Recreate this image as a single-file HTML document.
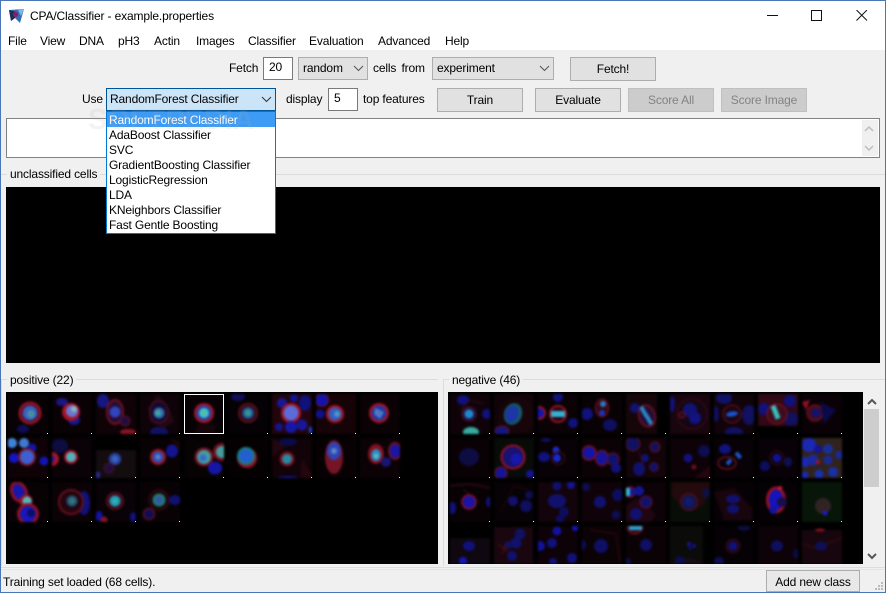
<!DOCTYPE html>
<html><head><meta charset="utf-8"><title>CPA/Classifier - example.properties</title>
<style>
html,body{margin:0;padding:0}
body{width:886px;height:593px;position:relative;overflow:hidden;background:#f0f0f0;font:12px/15px "Liberation Sans",sans-serif;color:#000;letter-spacing:-.15px}
.a{position:absolute;white-space:nowrap}
.box{position:absolute;box-sizing:border-box}
.in{background:#fff;border:1px solid #7a7a7a;padding-left:5px;line-height:18px}
.sel{background:#e1e1e1;border:1px solid #adadad;line-height:21px;padding-left:4px}
.btn{background:#e1e1e1;border:1px solid #adadad;text-align:center;line-height:22px}
.dis{background:#ccc;border:1px solid #bfbfbf;color:#838383}
.ln{position:absolute;background:#dcdcdc}
.lab{background:#f0f0f0;padding:0 3px}
.it{position:absolute;left:2px;height:15px;line-height:15px;white-space:nowrap}
svg.ch{position:absolute}
</style></head><body>
<div class="box" style="left:0;top:0;width:886px;height:50px;background:#fff"></div>

<svg class="a" style="left:8px;top:7px" width="17" height="17" viewBox="0 0 17 17"><path d="M1 3L16 2L12 16L7 11L3 14Z" fill="#2f6fb5"/><path d="M1 3L8 5L7 11L3 14Z" fill="#1d2f55"/><path d="M10 3L16 2L13 9Z" fill="#7fb8e8"/><circle cx="7.5" cy="7.5" r="2.6" fill="#8a1a6a"/></svg>
<div class="a" style="left:30px;top:9px">CPA/Classifier - example.properties</div>
<div class="box" style="left:767px;top:15px;width:11px;height:1px;background:#111"></div>
<div class="box" style="left:811px;top:10px;width:11px;height:11px;border:1px solid #111"></div>
<svg class="a" style="left:856px;top:10px" width="12" height="11"><path d="M.5 0L11 10.5M11 0L.5 10.5" stroke="#111" fill="none"/></svg>

<div class="a" style="left:8px;top:34px">File</div>
<div class="a" style="left:40px;top:34px">View</div>
<div class="a" style="left:79px;top:34px">DNA</div>
<div class="a" style="left:118px;top:34px">pH3</div>
<div class="a" style="left:154px;top:34px">Actin</div>
<div class="a" style="left:196px;top:34px">Images</div>
<div class="a" style="left:248px;top:34px">Classifier</div>
<div class="a" style="left:309px;top:34px">Evaluation</div>
<div class="a" style="left:378px;top:34px">Advanced</div>
<div class="a" style="left:445px;top:34px">Help</div>

<div class="a" style="left:229px;top:61px">Fetch</div>
<div class="box in" style="left:263px;top:57px;width:30px;height:23px">20</div>
<div class="box sel" style="left:298px;top:57px;width:70px;height:23px">random</div>
<svg class="ch" style="left:353px;top:65px" width="11" height="7"><path d="M1 1L5.5 5.5L10 1" stroke="#555" fill="none"/></svg>
<div class="a" style="left:373px;top:61px;word-spacing:2px">cells from</div>
<div class="box sel" style="left:432px;top:57px;width:122px;height:23px">experiment</div>
<svg class="ch" style="left:539px;top:65px" width="11" height="7"><path d="M1 1L5.5 5.5L10 1" stroke="#555" fill="none"/></svg>
<div class="box btn" style="left:570px;top:57px;width:86px;height:24px">Fetch!</div>

<div class="a" style="left:82px;top:92px">Use</div>
<div class="box" style="left:106px;top:88px;width:170px;height:23px;background:#cce4f7;border:1px solid #005499;padding-left:3px;line-height:21px">RandomForest Classifier</div>
<svg class="ch" style="left:261px;top:96px" width="11" height="7"><path d="M1 1L5.5 5.5L10 1" stroke="#333" fill="none"/></svg>
<div class="a" style="left:286px;top:92px">display</div>
<div class="box in" style="left:328px;top:88px;width:30px;height:23px">5</div>
<div class="a" style="left:363px;top:92px">top features</div>
<div class="box btn" style="left:437px;top:88px;width:86px;height:24px">Train</div>
<div class="box btn" style="left:535px;top:88px;width:86px;height:24px">Evaluate</div>
<div class="box btn dis" style="left:628px;top:88px;width:86px;height:24px">Score All</div>
<div class="box btn dis" style="left:721px;top:88px;width:86px;height:24px">Score Image</div>

<div class="box" style="left:6px;top:118px;width:874px;height:40px;background:#fff;border:1px solid #828282"></div>
<div class="box" style="left:862px;top:120px;width:16px;height:36px;background:#f0f0f0"></div>
<svg class="ch" style="left:864px;top:125px" width="10" height="28"><path d="M1 6L5 2L9 6M1 21L5 25L9 21" stroke="#bdbdbd" stroke-width="1.5" fill="none"/></svg>

<div class="ln" style="left:1px;top:174px;width:884px;height:1px"></div>
<div class="a lab" style="left:7px;top:167px">unclassified cells</div>
<div class="box" style="left:6px;top:187px;width:874px;height:176px;background:#000"></div>

<div class="ln" style="left:1px;top:379px;width:437px;height:1px"></div>
<div class="ln" style="left:443px;top:379px;width:442px;height:1px"></div>
<div class="ln" style="left:1px;top:380px;width:1px;height:186px"></div>
<div class="ln" style="left:443px;top:380px;width:1px;height:186px"></div>
<div class="a lab" style="left:7px;top:373px">positive (22)</div>
<div class="a lab" style="left:449px;top:373px">negative (46)</div>

<svg class="a" style="left:6px;top:392px" width="432" height="172" viewBox="6 392 432 172">
<defs><filter id="b" x="-5%" y="-5%" width="110%" height="110%" color-interpolation-filters="sRGB"><feGaussianBlur stdDeviation="1.1"/><feComponentTransfer><feFuncR type="linear" slope=".85"/><feFuncG type="linear" slope=".85"/><feFuncB type="linear" slope=".9"/></feComponentTransfer></filter></defs>
<rect x="6" y="392" width="432" height="172" fill="#000"/>
<g filter="url(#b)">
<svg x="8" y="394" width="40" height="40"><rect width="40" height="40" fill="#0a0306"/><ellipse cx="15" cy="35" rx="6" ry="4" fill="#101060"/><circle cx="22" cy="19" r="10" fill="#25103a" stroke="#b01428" stroke-width="3"/><circle cx="22" cy="19" r="7.5" fill="#4a70d0"/><circle cx="23" cy="20" r="4" fill="#50a8b8"/></svg>
<svg x="52" y="394" width="40" height="40"><rect width="40" height="40" fill="#0c0205"/><ellipse cx="10" cy="8" rx="6" ry="4" fill="#201a90"/><ellipse cx="22" cy="26" rx="6" ry="5" fill="#1c1ca0"/><circle cx="19" cy="18" r="9" fill="#c0182a"/><circle cx="20" cy="17" r="6" fill="#7f8ae8"/><circle cx="22" cy="15" r="3" fill="#a0d8d0"/></svg>
<svg x="96" y="394" width="40" height="40"><rect width="40" height="40" fill="#120408"/><ellipse cx="7" cy="7" rx="6" ry="7" fill="#1c1c90"/><ellipse cx="19" cy="18" rx="8" ry="12" fill="#2a103c" stroke="#8a1422" stroke-width="2"/><circle cx="19" cy="18" r="5.5" fill="#3a50d0"/><circle cx="29" cy="27" r="5" fill="#281048" stroke="#701422"/><ellipse cx="32" cy="38" rx="8" ry="3" fill="#a01828"/></svg>
<svg x="140" y="394" width="40" height="40"><rect width="40" height="40" fill="#10040a"/><path d="M18 0L30 16L34 28L24 34L10 28L8 14Z" fill="#2a0a14"/><ellipse cx="19" cy="18" rx="9" ry="11" fill="#180a38" stroke="#701420"/><circle cx="19" cy="19" r="5.5" fill="#3a80b8"/><circle cx="18" cy="19" r="3" fill="#50c0b8"/><ellipse cx="19" cy="38" rx="9" ry="5" fill="#151570"/></svg>
<svg x="184" y="394" width="40" height="40"><rect width="40" height="40" fill="#0a0305"/><path d="M10 40L14 30L30 30L32 40Z" fill="#1a060a"/><circle cx="20" cy="19" r="10" fill="#c0182a"/><circle cx="20" cy="19" r="7.5" fill="#2a50c0"/><circle cx="20" cy="19" r="5" fill="#58e0d0"/></svg>
<svg x="228" y="394" width="40" height="40"><rect width="40" height="40" fill="#060205"/><ellipse cx="10" cy="3" rx="7" ry="4" fill="#121260"/><circle cx="20" cy="19" r="9" fill="#300a14" stroke="#701420" stroke-width="2"/><circle cx="20" cy="19" r="6" fill="#2a60a8"/><circle cx="20" cy="19" r="3.5" fill="#40b0a0"/></svg>
<svg x="272" y="394" width="40" height="40"><rect width="40" height="40" fill="#2a060e"/><circle cx="10" cy="9" r="5" fill="#1c1ca8"/><circle cx="22" cy="4" r="4" fill="#1818a0"/><ellipse cx="33" cy="9" rx="6" ry="8" fill="#14148a"/><circle cx="19" cy="19" r="10" fill="#c0182a"/><circle cx="19" cy="19" r="7.5" fill="#6a80f0"/><circle cx="19" cy="33" r="6" fill="#1c1cb8"/><circle cx="30" cy="31" r="5.5" fill="#1c1ca8"/><circle cx="7" cy="33" r="4" fill="#1818a0"/><rect x="37" y="33" width="3" height="6" fill="#2050e0"/></svg>
<svg x="316" y="394" width="40" height="40"><rect width="40" height="40" fill="#1a0408"/><circle cx="6" cy="6" r="6.5" fill="#1818c0" stroke="#8a1020"/><circle cx="4" cy="20" r="4.5" fill="#1414a0"/><circle cx="19" cy="20" r="9" fill="#c0182a"/><circle cx="19" cy="20" r="6.5" fill="#3a70d8"/><circle cx="21" cy="20" r="3" fill="#60b0d0"/></svg>
<svg x="360" y="394" width="40" height="40"><rect width="40" height="40" fill="#0c0305"/><circle cx="19" cy="19" r="10" fill="#c0182a"/><circle cx="19" cy="19" r="7.5" fill="#2a40b8"/><path d="M15 14L24 18L20 25L14 20Z" fill="#5a90d8"/></svg>

<svg x="8" y="438" width="40" height="40"><rect width="40" height="40" fill="#120308"/><circle cx="4" cy="5" r="5" fill="#4a9af0"/><circle cx="16" cy="5" r="5" fill="#4a90e8"/><circle cx="24" cy="10" r="4.5" fill="#1818b8"/><circle cx="6" cy="20" r="5" fill="#1818d8"/><circle cx="19" cy="19" r="9" fill="#901828"/><circle cx="19" cy="19" r="7" fill="#4a70e8"/><circle cx="36" cy="23" r="4.5" fill="#1818c8"/></svg>
<svg x="52" y="438" width="40" height="40"><rect width="40" height="40" fill="#0c0308"/><ellipse cx="8" cy="8" rx="8" ry="7" fill="#10104a"/><circle cx="19" cy="19" r="7" fill="#c01828"/><circle cx="19" cy="19" r="5" fill="#60d0d0"/><circle cx="0" cy="21" r="7" fill="#c01830"/><circle cx="-1" cy="21" r="3.5" fill="#2020c8"/><circle cx="4" cy="21" r="1" fill="#c01830"/></svg>
<svg x="96" y="438" width="40" height="40"><rect width="40" height="12" fill="#000"/><rect y="12" width="40" height="28" fill="#181012"/><circle cx="19" cy="21" r="6" fill="#3050b8"/><circle cx="19" cy="21" r="3" fill="#4878d0"/><circle cx="13" cy="30" r="5" fill="#2a1048" stroke="#501428"/><rect y="34" width="4" height="6" fill="#3030a0"/></svg>
<svg x="140" y="438" width="40" height="40"><rect width="40" height="40" fill="#0a0305"/><ellipse cx="32" cy="13" rx="6" ry="6.5" fill="#1818a0"/><circle cx="18" cy="19" r="8" fill="#b01828"/><circle cx="18" cy="19" r="5.5" fill="#3a60d0"/><circle cx="18" cy="19" r="2.5" fill="#60a0d8"/><path d="M30 0L40 4V14Z" fill="#20060a"/></svg>
<svg x="184" y="438" width="40" height="40"><rect width="40" height="40" fill="#090304"/><circle cx="20" cy="19" r="9.5" fill="#8a1424"/><circle cx="20" cy="19" r="7" fill="#50b8b0"/><circle cx="19" cy="20" r="3.5" fill="#4080e0"/><circle cx="38" cy="14" r="9" fill="#8a1424"/><circle cx="38" cy="14" r="6" fill="#50b8b0"/><ellipse cx="31" cy="30" rx="7" ry="6.5" fill="#1a1ab8"/></svg>
<svg x="228" y="438" width="40" height="40"><rect width="40" height="40" fill="#060204"/><circle cx="19" cy="20" r="10" fill="#b01828"/><circle cx="18" cy="18" r="9" fill="#209090"/><circle cx="18" cy="18" r="6.5" fill="#2a70e8"/></svg>
<svg x="272" y="438" width="40" height="40"><rect width="40" height="40" fill="#140408"/><path d="M0 0L14 8L0 20ZM30 20L40 36V40H28Z" fill="#2a0810"/><ellipse cx="16" cy="4" rx="9" ry="4" fill="#0e0e50"/><circle cx="15" cy="21" r="7.5" fill="#8a1424"/><circle cx="15" cy="21" r="5" fill="#30a0b0"/><ellipse cx="16" cy="40" rx="10" ry="2" fill="#1818a0"/></svg>
<svg x="316" y="438" width="40" height="40"><rect width="40" height="40" fill="#0a0204"/><ellipse cx="18" cy="19" rx="9" ry="17" fill="#8a1828"/><ellipse cx="18" cy="13" rx="7" ry="9" fill="#3a50c8"/><circle cx="18" cy="13" r="3" fill="#6aa0d8"/></svg>
<svg x="360" y="438" width="40" height="40"><rect width="40" height="40" fill="#0e0306"/><ellipse cx="35" cy="13" rx="7" ry="9" fill="#8a1424"/><ellipse cx="35" cy="13" rx="5" ry="7" fill="#1c1cb8"/><ellipse cx="16" cy="16" rx="8" ry="10" fill="#9a1424"/><ellipse cx="16" cy="17" rx="5" ry="6" fill="#3aa0d0"/><circle cx="16" cy="18" r="2.5" fill="#60e0e0"/><circle cx="26" cy="24" r="5" fill="#1a1a80"/></svg>

<svg x="8" y="482" width="40" height="40"><rect width="40" height="40" fill="#0a0306"/><ellipse cx="11" cy="10" rx="7" ry="10" fill="#1c1cc0" stroke="#a81428" stroke-width="3" transform="rotate(-25 11 10)"/><circle cx="18" cy="19" r="6.5" fill="#b01828"/><circle cx="19" cy="19" r="4.5" fill="#60d8d0"/><circle cx="20" cy="32" r="9.5" fill="#1c1cd0" stroke="#a81428" stroke-width="3"/><circle cx="23" cy="31" r="4" fill="#101070"/></svg>
<svg x="52" y="482" width="40" height="40"><rect width="40" height="40" fill="#0e0306"/><ellipse cx="32" cy="21" rx="6" ry="12" fill="#141488"/><circle cx="19" cy="20" r="12" fill="#2a0612" stroke="#7a1222" stroke-width="2"/><circle cx="20" cy="19" r="5.5" fill="#2a6088"/><circle cx="20" cy="19" r="3" fill="#3a9078"/></svg>
<svg x="96" y="482" width="40" height="40"><rect width="40" height="40" fill="#0b0307"/><circle cx="19" cy="19" r="8.5" fill="#40101a" stroke="#781422"/><circle cx="19" cy="19" r="5.5" fill="#30b0c8"/><circle cx="19" cy="19" r="2.5" fill="#30d8c0"/><ellipse cx="3" cy="34" rx="3.5" ry="5" fill="#1616b8"/><circle cx="8" cy="38" r="3.5" fill="#9a1828"/><ellipse cx="37" cy="35" rx="3" ry="5" fill="#14148a"/></svg>
<svg x="140" y="482" width="40" height="40"><rect width="40" height="40" fill="#0a0306"/><circle cx="19" cy="18" r="10" fill="#20080c" stroke="#4a0e18"/><circle cx="19" cy="18" r="6.5" fill="#209080"/><circle cx="19" cy="18" r="3.5" fill="#4a60c0"/><ellipse cx="35" cy="18" rx="6" ry="5" fill="#141480"/><circle cx="9" cy="32" r="5.5" fill="#101060" stroke="#701420" stroke-width="1.5"/></svg>
</g>
<rect x="184.5" y="394.5" width="39" height="39" fill="none" stroke="#fff"/>
<g fill="#fff"><rect x="47" y="433" width="1" height="1"/><rect x="91" y="433" width="1" height="1"/><rect x="135" y="433" width="1" height="1"/><rect x="179" y="433" width="1" height="1"/><rect x="267" y="433" width="1" height="1"/><rect x="311" y="433" width="1" height="1"/><rect x="355" y="433" width="1" height="1"/><rect x="399" y="433" width="1" height="1"/><rect x="47" y="477" width="1" height="1"/><rect x="91" y="477" width="1" height="1"/><rect x="135" y="477" width="1" height="1"/><rect x="179" y="477" width="1" height="1"/><rect x="223" y="477" width="1" height="1"/><rect x="267" y="477" width="1" height="1"/><rect x="311" y="477" width="1" height="1"/><rect x="355" y="477" width="1" height="1"/><rect x="399" y="477" width="1" height="1"/><rect x="47" y="521" width="1" height="1"/><rect x="91" y="521" width="1" height="1"/><rect x="135" y="521" width="1" height="1"/><rect x="179" y="521" width="1" height="1"/></g>
</svg>

<svg class="a" style="left:448px;top:392px" width="415" height="172" viewBox="448 392 415 172">
<rect x="448" y="392" width="415" height="172" fill="#000"/>
<g filter="url(#b)">
<svg x="450" y="394" width="40" height="40"><rect width="40" height="40" fill="#12040a"/><ellipse cx="13" cy="6" rx="6" ry="5" fill="#14148a"/><circle cx="37" cy="20" r="5" fill="#14148a"/><path d="M10 16L20 6L34 10" stroke="#401018" fill="none"/><circle cx="19" cy="20" r="7" fill="#1c1860" stroke="#701420"/><circle cx="19" cy="20" r="4.5" fill="#28a0d8"/><ellipse cx="21" cy="38" rx="8" ry="5" fill="#40c8b0"/></svg>
<svg x="494" y="394" width="40" height="40"><rect width="40" height="40" fill="#14050a"/><path d="M2 40L6 14L20 2L38 8L40 30L30 40Z" fill="#1c060c"/><ellipse cx="19" cy="20" rx="9" ry="11" fill="#186a70" transform="rotate(20 19 20)"/><ellipse cx="18" cy="20" rx="6.5" ry="8.5" fill="#2040b8" transform="rotate(20 18 20)"/><ellipse cx="8" cy="37" rx="7" ry="5" fill="#1a1a90" stroke="#701420"/></svg>
<svg x="538" y="394" width="40" height="40"><rect width="40" height="40" fill="#0c0306"/><circle cx="20" cy="20" r="8" fill="#28081a" stroke="#b01828" stroke-width="2"/><rect x="13" y="17" width="14" height="6" fill="#40d0e8"/><circle cx="1" cy="19" r="6" fill="#1818c8" stroke="#b01828" stroke-width="2"/><circle cx="20" cy="3" r="5" fill="#14148a"/><circle cx="35" cy="29" r="5" fill="#14148a"/></svg>
<svg x="582" y="394" width="40" height="40"><rect width="40" height="40" fill="#0a0306"/><ellipse cx="20" cy="14" rx="6.5" ry="9" fill="#400a18" stroke="#901422"/><circle cx="21" cy="10" r="3" fill="#3090e0"/><circle cx="20" cy="19" r="3" fill="#2040d0"/><circle cx="5" cy="20" r="6" fill="#14148a"/><ellipse cx="28" cy="31" rx="7" ry="6" fill="#12126a"/></svg>
<svg x="626" y="394" width="31" height="40"><rect width="31" height="40" fill="#1a080c"/><circle cx="9" cy="14" r="5" fill="#161680"/><ellipse cx="21" cy="22" rx="8" ry="11" fill="#2a1040" stroke="#901422" stroke-width="1.5" transform="rotate(-15 21 22)"/><rect x="16" y="12" width="4" height="11" fill="#30a0d8" transform="rotate(-30 18 18)"/><rect x="21" y="20" width="4" height="11" fill="#30a0d8" transform="rotate(-30 23 26)"/></svg>
<svg x="670" y="394" width="40" height="40"><rect width="40" height="40" fill="#1e0610"/><circle cx="22" cy="20" r="15" fill="#180816" stroke="#4a0e18"/><circle cx="20" cy="16" r="7" fill="#161680"/><circle cx="25" cy="24" r="6" fill="#161690"/><circle cx="12" cy="21" r="3" fill="#300a20" stroke="#901422"/><ellipse cx="2" cy="10" rx="3" ry="8" fill="#161680"/></svg>
<svg x="714" y="394" width="40" height="40"><rect width="40" height="40" fill="#14040c"/><ellipse cx="10" cy="4" rx="8" ry="6" fill="#161670"/><circle cx="18" cy="20" r="9" fill="#200814" stroke="#801422"/><ellipse cx="18" cy="20" rx="6" ry="2.5" fill="#2060e8" transform="rotate(-8 18 20)"/><ellipse cx="35" cy="21" rx="7" ry="10" fill="#14146a"/><ellipse cx="20" cy="38" rx="9" ry="5" fill="#14146a"/><ellipse cx="2" cy="20" rx="3" ry="8" fill="#12126a"/></svg>
<svg x="758" y="394" width="40" height="32"><rect width="40" height="32" fill="#3a0a18"/><circle cx="6" cy="15" r="6" fill="#14148a"/><circle cx="32" cy="7" r="6" fill="#14148a"/><circle cx="33" cy="25" r="7" fill="#14146a"/><circle cx="19" cy="20" r="10" fill="#4a1020" stroke="#a01424"/><rect x="15" y="11" width="5" height="14" fill="#40e0d0" transform="rotate(-22 18 18)"/></svg>
<svg x="802" y="394" width="40" height="40"><rect width="40" height="40" fill="#0c0208"/><circle cx="13" cy="19" r="8" fill="#501020" stroke="#a01424"/><circle cx="14" cy="19" r="4.5" fill="#161680"/><path d="M18 8L34 16L22 30Z" fill="#0c0c50"/><path d="M0 8L8 6L4 16Z" fill="#a81428"/></svg>

<svg x="450" y="438" width="40" height="40"><rect width="40" height="40" fill="#0c0206"/><ellipse cx="19" cy="19" rx="10" ry="9" fill="#10104a"/></svg>
<svg x="494" y="438" width="40" height="40"><rect width="40" height="40" fill="#0a0e08"/><circle cx="19" cy="19" r="11.5" fill="#1e1680" stroke="#b01428" stroke-width="2"/><circle cx="22" cy="21" r="5.5" fill="#1c1cc0"/><ellipse cx="7" cy="35" rx="6" ry="6" fill="#1818a8" stroke="#901422"/><circle cx="36" cy="36" r="4" fill="#1818a0"/></svg>
<svg x="538" y="438" width="40" height="40"><rect width="40" height="40" fill="#0a0206"/><circle cx="18" cy="12" r="3.5" fill="#2030d8"/><circle cx="19" cy="20" r="4" fill="#1c30e0"/><ellipse cx="6" cy="19" rx="6" ry="5" fill="#14148a"/><circle cx="20" cy="20" r="6.5" fill="none" stroke="#601020"/><ellipse cx="8" cy="2" rx="5" ry="2" fill="#12126a"/></svg>
<svg x="582" y="438" width="40" height="40"><rect width="40" height="40" fill="#0e0306"/><circle cx="7" cy="15" r="7" fill="#1818b8" stroke="#901422" stroke-width="1.5"/><ellipse cx="20" cy="20" rx="6.5" ry="7.5" fill="#1818b0" stroke="#801422" stroke-width="1.5"/><circle cx="31" cy="21" r="6" fill="#14147a" stroke="#801422"/><circle cx="34" cy="30" r="5" fill="#14148a"/></svg>
<svg x="626" y="438" width="40" height="40"><rect width="40" height="40" fill="#16050a"/><circle cx="7" cy="6" r="7" fill="#14146a" stroke="#701420"/><ellipse cx="13" cy="31" rx="6" ry="7" fill="#14147a"/><circle cx="19" cy="20" r="4" fill="#141480"/><circle cx="28" cy="29" r="4.5" fill="#14147a" stroke="#601020"/><circle cx="29" cy="9" r="5" fill="#14146a" stroke="#801420"/><path d="M13 14L17 26" stroke="#501018"/></svg>
<svg x="670" y="438" width="40" height="40"><rect width="40" height="40" fill="#100308"/><circle cx="18" cy="20" r="4.5" fill="#14148a"/><circle cx="34" cy="13" r="6" fill="#10105a"/><circle cx="24" cy="29" r="2.5" fill="#7a1020"/><path d="M24 40L40 28V40Z" fill="#2a0812"/></svg>
<svg x="714" y="438" width="40" height="40"><rect width="40" height="40" fill="#0a0206"/><ellipse cx="11" cy="11" rx="6" ry="5" fill="#16168a"/><rect x="13" y="21" width="4" height="6" fill="#2060e0" transform="rotate(40 15 24)"/><rect x="22" y="14" width="4" height="7" fill="#2060e0" transform="rotate(-40 24 17)"/><ellipse cx="13" cy="25" rx="9" ry="6" fill="none" stroke="#801422" stroke-width="1.5"/></svg>
<svg x="758" y="438" width="40" height="40"><rect width="40" height="40" fill="#0a0208"/><circle cx="19" cy="20" r="4.5" fill="#1616a0"/><circle cx="19" cy="20" r="7" fill="none" stroke="#4a0e18"/><ellipse cx="7" cy="28" rx="5" ry="5" fill="#10106a"/><ellipse cx="30" cy="24" rx="4" ry="5" fill="#12125a"/></svg>
<svg x="802" y="438" width="40" height="40"><rect width="40" height="40" fill="#3a2a20"/><circle cx="7" cy="7" r="7" fill="#2030c8"/><circle cx="3" cy="24" r="5" fill="#2030c8"/><circle cx="16" cy="11" r="4" fill="#1818a8"/><circle cx="26" cy="11" r="5" fill="#1e38a8"/><circle cx="11" cy="22" r="5.5" fill="#2030b0"/><circle cx="26" cy="22" r="4.5" fill="#1e30a8"/><circle cx="37" cy="17" r="4" fill="#1e30a8"/><circle cx="17" cy="36" r="4.5" fill="#1e38c0"/><circle cx="31" cy="34" r="5" fill="#1e38b8"/><circle cx="3" cy="37" r="3.5" fill="#2030c8"/><circle cx="16" cy="24" r="2" fill="#c01424"/></svg>

<svg x="450" y="482" width="40" height="40"><rect width="40" height="40" fill="#0a0306"/><path d="M0 4L20 2L40 6M14 8L26 18" stroke="#501018" fill="none"/><circle cx="19" cy="20" r="7" fill="#2018b8" stroke="#a81428" stroke-width="1.5"/><ellipse cx="2" cy="26" rx="4" ry="6" fill="#14148a"/><ellipse cx="39" cy="20" rx="3" ry="5" fill="#14148a"/></svg>
<svg x="494" y="482" width="40" height="40"><rect width="40" height="40" fill="#090306"/><path d="M6 30L20 4L34 8" stroke="#2a0810" fill="none"/><circle cx="19" cy="19" r="5" fill="#14147a"/><circle cx="32" cy="24" r="6" fill="#12126a"/><circle cx="35" cy="13" r="4" fill="#10105a"/></svg>
<svg x="538" y="482" width="40" height="40"><rect width="40" height="40" fill="#16050c"/><ellipse cx="19" cy="19" rx="9" ry="7" fill="#14147a"/><circle cx="19" cy="4" r="4.5" fill="#14147a"/><circle cx="33" cy="3" r="4" fill="#1818a0"/><circle cx="26" cy="30" r="5" fill="#10106a"/><circle cx="22" cy="37" r="4" fill="#10106a"/></svg>
<svg x="582" y="482" width="40" height="40"><rect width="40" height="40" fill="#12040a"/><circle cx="18" cy="20" r="6" fill="#14147a"/><circle cx="4" cy="5" r="4" fill="#10105a"/><circle cx="36" cy="13" r="6" fill="#10106a"/><circle cx="34" cy="33" r="4.5" fill="#10105a"/></svg>
<svg x="626" y="482" width="40" height="40"><rect width="40" height="40" fill="#0f0308"/><path d="M0 24L10 16L22 22L30 34L24 40H0Z" fill="#260812"/><circle cx="4" cy="10" r="5" fill="#1818a8" stroke="#b01428"/><rect x="0" y="6" width="4" height="8" fill="#40d8e0"/><circle cx="13" cy="9" r="5" fill="#1818a0"/><circle cx="20" cy="20" r="6" fill="#14147a" stroke="#801422"/><circle cx="10" cy="32" r="6" fill="#14147a"/></svg>
<svg x="670" y="482" width="40" height="40"><rect width="40" height="40" fill="#0a1008"/><path d="M3 2Q-2 14 10 22Q22 34 34 22Q38 14 40 0L40 0H2Z" fill="#2a0c0e"/><circle cx="19" cy="20" r="8.5" fill="#1a1a50" stroke="#5a1018" stroke-width="1.5"/><circle cx="19" cy="20" r="4.5" fill="#14207a"/><ellipse cx="36" cy="11" rx="4" ry="5" fill="#12124a"/></svg>
<svg x="714" y="482" width="40" height="40"><rect width="40" height="40" fill="#080206"/><path d="M0 10L20 6L38 26L38 38L10 38Z" fill="#1e060e"/><ellipse cx="19" cy="17" rx="7" ry="4.5" fill="#14147a"/><ellipse cx="19" cy="27" rx="6" ry="4.5" fill="#14147a"/></svg>
<svg x="758" y="482" width="40" height="40"><rect width="40" height="40" fill="#060206"/><ellipse cx="18" cy="18" rx="8.5" ry="12" fill="#1818d0" stroke="#b01428" stroke-width="3"/><circle cx="15" cy="28" r="4" fill="#1818b0"/><circle cx="22" cy="6" r="2" fill="#f02030"/><circle cx="24" cy="20" r="5" fill="#201050"/></svg>
<svg x="802" y="482" width="40" height="40"><rect width="40" height="40" fill="#0a1a0a"/><circle cx="21" cy="24" r="8" fill="#3a2a28"/><circle cx="23" cy="31" r="2.5" fill="#2020e0"/></svg>

<svg x="450" y="526" width="40" height="38"><rect width="40" height="12" fill="#000"/><rect y="12" width="40" height="28" fill="#120a12"/><ellipse cx="19" cy="20" rx="6" ry="5" fill="#14148a"/><circle cx="13" cy="35" r="4" fill="#1818d0"/></svg>
<svg x="494" y="526" width="39" height="38"><rect y="1" width="39" height="40" fill="#1e0810"/><circle cx="26" cy="8" r="5.5" fill="#14146a"/><circle cx="22" cy="17" r="5.5" fill="#14147a"/><circle cx="14" cy="19" r="4" fill="#14146a"/><circle cx="18" cy="30" r="5" fill="#14147a"/><path d="M4 18L14 26M8 28L12 18" stroke="#6a1018"/></svg>
<svg x="538" y="526" width="40" height="38"><rect width="40" height="40" fill="#100308"/><circle cx="19" cy="5" r="4.5" fill="#1414b0"/><circle cx="14" cy="17" r="5" fill="#14148a"/><circle cx="2" cy="20" r="5" fill="#1414b0"/><circle cx="37" cy="2" r="3" fill="#1818d0"/><circle cx="34" cy="32" r="5" fill="#14148a"/><circle cx="15" cy="36" r="4" fill="#14148a"/></svg>
<svg x="582" y="526" width="40" height="38"><rect width="40" height="40" fill="#0e0306"/><path d="M8 4L34 8L38 36" stroke="#3a0c14" fill="none"/><circle cx="19" cy="20" r="7" fill="#121270"/><ellipse cx="1" cy="19" rx="3" ry="5" fill="#101060"/></svg>
<svg x="626" y="526" width="40" height="38"><rect width="40" height="40" fill="#0d0306"/><circle cx="9" cy="0" r="8" fill="#40101a" stroke="#a01424"/><rect x="3" y="0" width="13" height="4" fill="#30c0e8"/><circle cx="20" cy="19" r="6" fill="#121270"/><circle cx="1" cy="36" r="4" fill="#10105a"/></svg>
<svg x="670" y="526" width="33" height="38"><rect width="33" height="40" fill="#0e0e0a"/><path d="M0 38Q20 26 33 38Z" fill="#1a1018"/><circle cx="19" cy="18" r="2" fill="#1818b0"/><circle cx="24" cy="20" r="2" fill="#1414a0"/><circle cx="20" cy="22" r="1.5" fill="#1414a0"/><circle cx="10" cy="35" r="5" fill="#10105a"/></svg>
<svg x="714" y="526" width="40" height="38"><rect width="40" height="40" fill="#060206"/><circle cx="19" cy="20" r="7" fill="#200816" stroke="#4a0e18"/><circle cx="19" cy="20" r="4.5" fill="#14148a"/><ellipse cx="5" cy="35" rx="5" ry="4" fill="#10105a"/><ellipse cx="30" cy="1" rx="6" ry="4" fill="#10104a"/></svg>
<svg x="758" y="526" width="40" height="38"><rect width="40" height="40" fill="#100308"/><ellipse cx="19" cy="20" rx="6" ry="5.5" fill="#12126a"/><ellipse cx="38" cy="28" rx="3" ry="5" fill="#0e0e4a"/></svg>
<svg x="802" y="526" width="40" height="38"><rect width="40" height="4" fill="#000"/><rect y="4" width="40" height="36" fill="#1c0810"/><path d="M0 18L14 22L40 12" stroke="#4a0e18" fill="none"/><ellipse cx="19" cy="20" rx="6" ry="4.5" fill="#121262"/><ellipse cx="18" cy="4" rx="5" ry="1.5" fill="#a01424"/></svg>
</g>
<g fill="#fff"><rect x="489" y="433" width="1" height="1"/><rect x="533" y="433" width="1" height="1"/><rect x="577" y="433" width="1" height="1"/><rect x="621" y="433" width="1" height="1"/><rect x="665" y="433" width="1" height="1"/><rect x="709" y="433" width="1" height="1"/><rect x="753" y="433" width="1" height="1"/><rect x="797" y="433" width="1" height="1"/><rect x="841" y="433" width="1" height="1"/><rect x="489" y="477" width="1" height="1"/><rect x="533" y="477" width="1" height="1"/><rect x="577" y="477" width="1" height="1"/><rect x="621" y="477" width="1" height="1"/><rect x="665" y="477" width="1" height="1"/><rect x="709" y="477" width="1" height="1"/><rect x="753" y="477" width="1" height="1"/><rect x="797" y="477" width="1" height="1"/><rect x="841" y="477" width="1" height="1"/><rect x="489" y="521" width="1" height="1"/><rect x="533" y="521" width="1" height="1"/><rect x="577" y="521" width="1" height="1"/><rect x="621" y="521" width="1" height="1"/><rect x="665" y="521" width="1" height="1"/><rect x="709" y="521" width="1" height="1"/><rect x="753" y="521" width="1" height="1"/><rect x="797" y="521" width="1" height="1"/><rect x="841" y="521" width="1" height="1"/></g>
</svg>

<div class="box" style="left:864px;top:409px;width:15px;height:78px;background:#cdcdcd"></div>
<svg class="ch" style="left:866px;top:398px" width="12" height="165"><path d="M2 6L6 2L10 6M2 156L6 160L10 156" stroke="#555" stroke-width="2" fill="none"/></svg>

<div class="ln" style="left:1px;top:567px;width:884px;height:1px"></div>
<div class="ln" style="left:1px;top:569px;width:884px;height:1px;background:#e4e4e4"></div>
<div class="a" style="left:3px;top:575px">Training set loaded (68 cells).</div>
<div class="box" style="left:766px;top:570px;width:94px;height:22px;background:#e8e8e8;border:1px solid #adadad;text-align:center;line-height:22px">Add new class</div>
<svg class="a" style="left:874px;top:581px" width="10" height="10"><g fill="#bcbcbc"><rect x="7" y="1" width="2" height="2"/><rect x="4" y="4" width="2" height="2"/><rect x="7" y="4" width="2" height="2"/><rect x="1" y="7" width="2" height="2"/><rect x="4" y="7" width="2" height="2"/><rect x="7" y="7" width="2" height="2"/></g></svg>

<div class="box" style="left:106px;top:111px;width:170px;height:123px;background:#fff;border:1px solid #0078d7">
<div class="box" style="left:0;top:0;width:168px;height:15px;background:#3d9bf5"></div>
<div class="it" style="top:1px;color:#fff">RandomForest Classifier</div>
<div class="it" style="top:16px">AdaBoost Classifier</div>
<div class="it" style="top:31px">SVC</div>
<div class="it" style="top:46px">GradientBoosting Classifier</div>
<div class="it" style="top:61px">LogisticRegression</div>
<div class="it" style="top:76px">LDA</div>
<div class="it" style="top:91px">KNeighbors Classifier</div>
<div class="it" style="top:106px">Fast Gentle Boosting</div>
</div>
<div class="a" style="left:88px;top:104px;font:bold 29px/32px 'Liberation Sans',sans-serif;letter-spacing:0;color:rgba(170,170,170,.14)">SOFTPEDIA</div>

<div class="box" style="left:0;top:0;width:886px;height:593px;border:1px solid #4a76b8;pointer-events:none"></div>
</body></html>
